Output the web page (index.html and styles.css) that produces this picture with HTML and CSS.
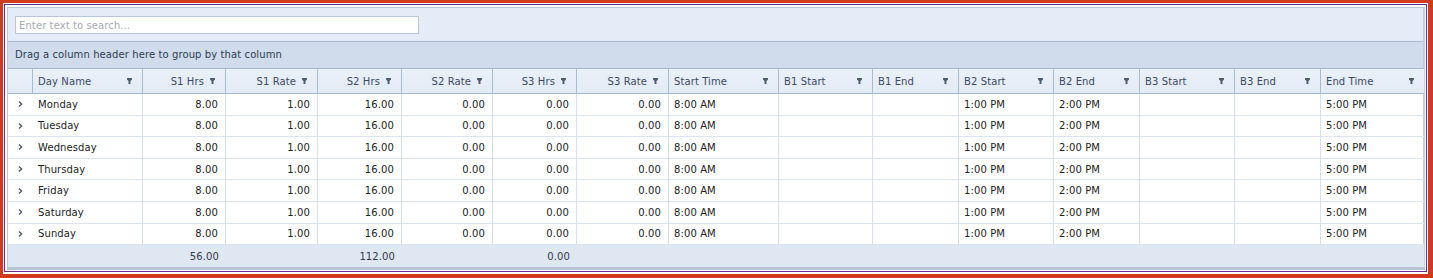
FILE: index.html
```html
<!DOCTYPE html>
<html>
<head>
	<meta charset="utf-8">
	<meta name="viewport" content="width=device-width, initial-scale=1">
	<title>Shift Schedule</title>
	<link rel="stylesheet" href="styles.css">
</head>
<body>
<div class="frame">
<div class="frame-inner">
<div class="grid">

	<div class="search-panel">
		<input class="search-box" type="text" placeholder="Enter text to search...">
	</div>

	<div class="group-panel">Drag a column header here to group by that column</div>

	<table class="data">
		<colgroup>
			<col style="width:25px"><col style="width:110px"><col style="width:83px"><col style="width:92px">
			<col style="width:84px"><col style="width:91px"><col style="width:84px"><col style="width:92px">
			<col style="width:110px"><col style="width:94px"><col style="width:86px"><col style="width:95px">
			<col style="width:86px"><col style="width:95px"><col style="width:86px"><col style="width:103px">
		</colgroup>
		<thead>
			<tr>
				<th class="ind"></th>
				<th><div class="hd"><span>Day Name</span><i class="flt"></i></div></th>
				<th><div class="hd num"><span>S1 Hrs</span><i class="flt"></i></div></th>
				<th><div class="hd num"><span>S1 Rate</span><i class="flt"></i></div></th>
				<th><div class="hd num"><span>S2 Hrs</span><i class="flt"></i></div></th>
				<th><div class="hd num"><span>S2 Rate</span><i class="flt"></i></div></th>
				<th><div class="hd num"><span>S3 Hrs</span><i class="flt"></i></div></th>
				<th><div class="hd num"><span>S3 Rate</span><i class="flt"></i></div></th>
				<th><div class="hd"><span>Start Time</span><i class="flt"></i></div></th>
				<th><div class="hd"><span>B1 Start</span><i class="flt"></i></div></th>
				<th><div class="hd"><span>B1 End</span><i class="flt"></i></div></th>
				<th><div class="hd"><span>B2 Start</span><i class="flt"></i></div></th>
				<th><div class="hd"><span>B2 End</span><i class="flt"></i></div></th>
				<th><div class="hd"><span>B3 Start</span><i class="flt"></i></div></th>
				<th><div class="hd"><span>B3 End</span><i class="flt"></i></div></th>
				<th class="last"><div class="hd"><span>End Time</span><i class="flt"></i></div></th>
			</tr>
		</thead>
		<tbody id="rows"></tbody>
		<tfoot>
			<tr>
				<td></td><td></td><td class="n">56.00</td><td></td><td class="n">112.00</td><td></td><td class="n">0.00</td>
				<td></td><td></td><td></td><td></td><td></td><td></td><td></td><td></td><td></td>
			</tr>
		</tfoot>
	</table>

</div>
</div>
</div>

<script type="text/javascript">
	let days = ["Monday","Tuesday","Wednesday","Thursday","Friday","Saturday","Sunday"];
	let body = document.getElementById("rows");
	let chevron = '<svg width="5" height="6" viewBox="0 0 5 6"><path d="M1 0.5 L3.6 3 L1 5.5" fill="none" stroke="#4a5a72" stroke-width="1.4"/></svg>';

	for(let i=0; i<days.length; i++){
		let tr = document.createElement("tr");
		tr.innerHTML =
			'<td class="ind">' + chevron + '</td>' +
			'<td class="day">' + days[i] + '</td>' +
			'<td class="n">8.00</td><td class="n">1.00</td>' +
			'<td class="n">16.00</td><td class="n">0.00</td>' +
			'<td class="n">0.00</td><td class="n">0.00</td>' +
			'<td>8:00 AM</td><td></td><td></td>' +
			'<td>1:00 PM</td><td>2:00 PM</td><td></td><td></td>' +
			'<td class="last">5:00 PM</td>';
		body.appendChild(tr);
	}
</script>
</body>
</html>
```

FILE: styles.css
```css
body{margin: 0; background: #fff; font-family: "DejaVu Sans", Verdana, sans-serif; font-size: 10px; letter-spacing: 0.1px;}

.frame{
	border: solid #d13a1e;
	border-width: 3px 5px 5px 3px;
	padding: 1px 1px 2px 1px;
	background: #fff;
}
.frame-inner{
	border: 1px solid #6b2d8f;
	padding: 2px 1px 1px 2px;
	background: #fff;
}
.grid{
	border: 1px solid #b9c8da;
	border-right: 2px solid #c2cedc;
	border-bottom: 3px solid #b6c4d5;
	background: #fff;
}

.search-panel{
	height: 33px;
	box-sizing: border-box;
	padding: 8px 7px 0 7px;
	background: #e3ecf7;
}
.search-box{
	display: block;
	width: 404px; height: 18px;
	box-sizing: border-box;
	margin: 0;
	padding: 0 3px;
	border: 1px solid #b7c6d9;
	background: #fff;
	font-family: inherit; font-size: 10px; letter-spacing: 0.1px;
	color: #333;
	outline: none;
}
.search-box::placeholder{color: #a4a9b0;}

.group-panel{
	height: 27px;
	box-sizing: border-box;
	padding: 0 7px;
	line-height: 26px;
	border-top: 1px solid #a9bcd3;
	background: #d0dcec;
	color: #2d3c52;
}

.data{
	width: 1415px;
	table-layout: fixed;
	border-collapse: separate;
	border-spacing: 0;
}
.data th{
	height: 24px;
	padding: 0;
	border-top: 1px solid #a4b7ce;
	border-bottom: 1px solid #a4b7ce;
	border-right: 1px solid #a9bbd1;
	background: linear-gradient(#ebf1f9, #e2eaf5);
	color: #3a4a62;
	font-weight: normal;
	text-align: left;
}
.data th.last{border-right: none;}
.hd{
	display: flex;
	align-items: center;
	gap: 6px;
	padding: 0 10px 0 5px;
	white-space: nowrap;
}
.hd span{flex: 1;}
.hd.num span{text-align: right;}
.flt{
	display: block;
	width: 5px; height: 6px;
	flex: none;
	background: #4c5c73;
	clip-path: polygon(0 0, 100% 0, 100% 25%, 70% 50%, 70% 100%, 30% 100%, 30% 50%, 0 25%);
}

.data td{
	height: 20.6px;
	padding: 0 6px 0 5px;
	border-bottom: 1px solid #dbe5f1;
	border-right: 1px solid #d6e1ee;
	color: #222;
	white-space: nowrap;
	overflow: hidden;
}
.data td.n{text-align: right; padding-right: 7px;}
.data td.last{border-right: none;}
.data td.ind{
	padding: 0 0 0 10px;
	border-right: none;
	line-height: 0;
}

.data tfoot td{
	height: 21.8px;
	border: none;
	background: #dfe7f3;
	color: #2f3a4a;
}
```
